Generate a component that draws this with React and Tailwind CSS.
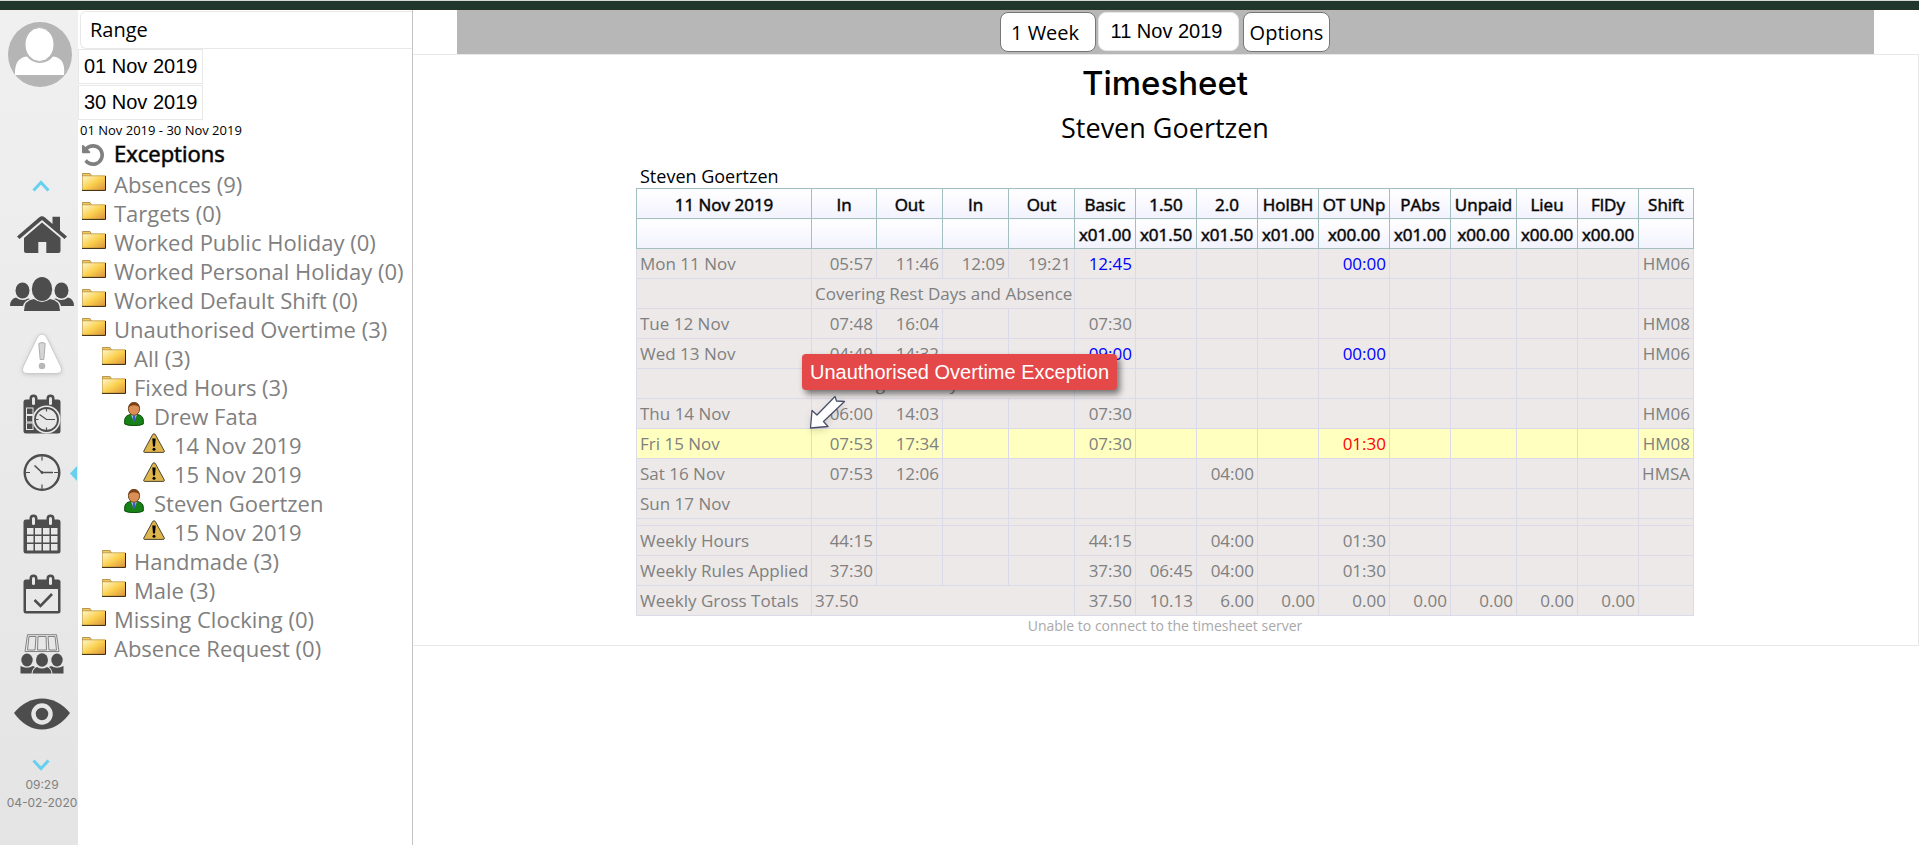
import React, { useState } from 'react'

const FolderIcon = () => (
    <svg viewBox="0 0 24 18" className="w-6 h-[18px]">
        <defs>
            <linearGradient id="folder" x1="0" y1="0" x2="1" y2="1">
                <stop offset="0" stopColor="#fff8d0" />
                <stop offset="0.5" stopColor="#fbd04e" />
                <stop offset="1" stopColor="#d8903c" />
            </linearGradient>
        </defs>
        <path d="M0.5 3V0.5H8L9.5 3Z" fill="#f3c95a" stroke="#a5823a" strokeWidth="0.8" />
        <rect x="0.5" y="2.7" width="23" height="14.8" fill="url(#folder)" />
        <path d="M0.4 17V2.8H23.5" fill="none" stroke="#c09a48" strokeWidth="0.8" />
        <path d="M23.5 3V17.4H0" fill="none" stroke="#33230c" strokeWidth="1" />
    </svg>
)

const PersonIcon = () => (
    <svg viewBox="0 0 20 24" className="w-5 h-6">
        <path d="M0.7 22V18Q1 13.5 6.5 12.5H13.5Q19 13.5 19.3 18V22Q17 23.6 10 23.6T0.7 22Z" fill="#178017" stroke="#0b4f0b" />
        <path d="M7 12.5H13L10.5 19H9.5Z" fill="#a9c4ff" />
        <path d="M9 13.5H11.2L11.4 18L10 20L8.8 18Z" fill="#4456c8" />
        <ellipse cx="10" cy="6.8" rx="5.6" ry="6.5" fill="#d98f55" stroke="#6b3c14" strokeWidth="0.9" />
        <path d="M4.2 6Q4.6 0.4 10 0.4T15.8 6Q14 3.2 10 3.2T4.2 6Z" fill="#7a4216" />
    </svg>
)

const AlertIcon = () => (
    <svg viewBox="0 0 22 20" className="w-[22px] h-5">
        <path d="M11 0.8Q12 0.8 12.6 2L21.3 18Q21.5 19.3 20.5 19.4H1.5Q0.5 19.3 0.8 18L9.4 2Q10 0.8 11 0.8Z" fill="#dfb64c" stroke="#4d4634" />
        <path d="M9.3 5.5H12.7L12 13.5H10Z" fill="#000" />
        <circle cx="11" cy="16.2" r="1.5" fill="#000" />
    </svg>
)

const UndoIcon = () => (
    <svg viewBox="0 128 1536 1536" className="w-[22px] h-[22px]">
        <path fill="#808080" d="M1536 896q0 156-61 298t-164 245-245 164-298 61q-172 0-327-72.5t-264-204.5q-7-10-6.5-22.5t8.500-20.500l137-138q10-9 25-9 16 2 23 12 73 95 179 147t225 52q104 0 198.500-40.500t163.500-109.500 109.500-163.500 40.500-198.500-40.500-198.500-109.500-163.500-163.500-109.500-198.500-40.500q-98 0-188 35.500t-160 101.500l137 138q31 30 14 69-17 40-59 40h-448q-26 0-45-19t-19-45v-448q0-42 40-59 39-17 69 14l130 129q107-101 244.500-156.500t284.500-55.500q156 0 298 61t245 164 164 245 61 298z" />
    </svg>
)

const HomeIcon = () => (
    <svg viewBox="0 0 50 37" className="w-[50px] h-[37px]" fill="#4d4d4d">
        <path d="M25 0.3Q26.500 0.3 28 1.500L35.500 8V0.800H43V14.500L50 20.500L47.500 23L25 4L2.500 23L0 20.500L22 1.500Q23.500 0.300 25 0.300Z" />
        <path d="M25 6.500L43.500 22V35Q43.500 37 41.500 37H29.300V26H21.300V37H9Q7 37 7 35V22Z" />
    </svg>
)

const UsersIcon = () => (
    <svg viewBox="0 0 64 34" className="w-16 h-[34px]" fill="#4d4d4d">
        <ellipse cx="12.500" cy="13.500" rx="7" ry="8" />
        <ellipse cx="51.500" cy="13.500" rx="7" ry="8" />
        <path d="M0 29Q0 22 6 20.500Q12 25 18 21.500L20 22Q14 24 13 29Z" />
        <path d="M64 29Q64 22 58 20.500Q52 25 46 21.500L44 22Q50 24 51 29Z" />
        <ellipse cx="32" cy="12" rx="10.200" ry="12" />
        <path d="M14 34Q14 23 24 22Q32 28 40 22Q50 23 50 34Z" />
    </svg>
)

const WarningIcon = () => (
    <svg viewBox="0 0 42 42" className="w-[42px] h-[42px] drop-shadow-sm">
        <path d="M21 1Q24 1 26 5L40 34Q42 40 36 40.500H6Q0 40 2 34L16 5Q18 1 21 1Z" fill="#fff" stroke="#cbcbcb" />
        <path d="M17.800 10.500Q21 8.500 24.200 10.500L22.800 26.500H19.200Z" fill="#d6d6d6" stroke="#adadad" />
        <circle cx="21" cy="33" r="3.300" fill="#b8b8b8" />
    </svg>
)

// shared calendar body, the children go on the page of it
const Calendar = ({ children }) => (
    <svg viewBox="0 0 38 40" className="w-[38px] h-10">
        <rect x="0.500" y="5.500" width="37" height="34" rx="2.500" fill="#4d4d4d" />
        <rect x="6.500" y="0.500" width="8" height="13" rx="4" fill="#4d4d4d" />
        <rect x="23.500" y="0.500" width="8" height="13" rx="4" fill="#4d4d4d" />
        <rect x="9" y="3" width="3" height="8" rx="1.500" fill="#e8e8e8" />
        <rect x="26" y="3" width="3" height="8" rx="1.500" fill="#e8e8e8" />
        {children}
    </svg>
)

const CalendarClockIcon = () => (
    <Calendar>
        {[14, 21.500, 29].map((y) => (
            <rect key={y} x="3.500" y={y} width="6.500" height="6.500" fill="#4d4d4d" stroke="#e8e8e8" />
        ))}
        <circle cx="23.500" cy="25.500" r="14" fill="#e8e8e8" />
        <circle cx="23.500" cy="25.500" r="11.500" fill="none" stroke="#4d4d4d" strokeWidth="1.800" />
        <path d="M16.500 20.500L23.500 25.500H32M23.500 15V17.500M23.500 33.500V36M13 25.500H15.500" fill="none" stroke="#4d4d4d" strokeWidth="1.200" />
    </Calendar>
)

const ClockIcon = () => (
    <svg viewBox="0 0 38 40" className="w-[38px] h-10" fill="none" stroke="#4d4d4d">
        <circle cx="19" cy="18.500" r="17.300" strokeWidth="2.400" />
        <path d="M11.500 11.500L19 18.500H30" strokeWidth="1.600" />
        <path d="M19 2.500V6.500M19 30.500V34.500M3 18.500H7M31 18.500H35" strokeWidth="1.200" />
        <circle cx="19" cy="18.500" r="1" fill="#4d4d4d" />
    </svg>
)

const CalendarGridIcon = () => (
    <Calendar>
        {[14, 22, 30].map((y) =>
            [4, 12, 20, 28].map((x) => (
                <rect key={x + '-' + y} x={x} y={y} width="6.500" height="6.500" fill="#e8e8e8" />
            ))
        )}
    </Calendar>
)

const CalendarCheckIcon = () => (
    <Calendar>
        <rect x="3" y="15" width="32" height="22" fill="#e8e8e8" />
        <path d="M11.500 26L17.500 32L29 20" fill="none" stroke="#4d4d4d" strokeWidth="2.600" />
    </Calendar>
)

const MeetingIcon = () => (
    <svg viewBox="0 0 44 40" className="w-11 h-10">
        <g fill="none" stroke="#777" strokeWidth="0.900">
            <path d="M7.500 0.700H36.500L39 17.500H5Z" />
            <path d="M9 2.500L7.500 16H15L16 2.500ZM18 2.500L17.500 16H26.500L26 2.500ZM28 2.500L29 16H36.500L35 2.500Z" />
        </g>
        <g fill="#4d4d4d">
            <ellipse cx="7" cy="26" rx="5.700" ry="6.500" />
            <ellipse cx="37" cy="26" rx="5.700" ry="6.500" />
            <ellipse cx="22" cy="26" rx="6" ry="6.800" />
            <path d="M0.500 39.500V32Q7 35.500 13 32L15 33Q12 35 11.500 39.500Z" />
            <path d="M43.500 39.500V32Q37 35.500 31 32L29 33Q32 35 32.500 39.500Z" />
            <path d="M12.500 39.500Q13 34.500 17 33Q22 36 27 33Q31 34.500 31.500 39.500Z" />
        </g>
    </svg>
)

const EyeIcon = () => (
    <svg viewBox="0 0 56 32" className="w-14 h-8">
        <path d="M0 15Q12 0.500 28 0.500T56 15Q44 31.500 28 31.500T0 15Z" fill="#4d4d4d" />
        <circle cx="28" cy="16" r="8.500" fill="none" stroke="#e6e6e6" strokeWidth="4.500" />
    </svg>
)

const AvatarIcon = () => (
    <svg viewBox="0 0 64 65" className="w-16 h-[65px]">
        <ellipse cx="32" cy="32.500" rx="32" ry="32.500" fill="#b5b5b5" />
        <path d="M7 53Q6 36 19 34.500Q24 41 32 41T45 34.500Q58 36 56 53Z" fill="#fff" />
        <ellipse cx="31.500" cy="22.500" rx="14.500" ry="17" fill="#fff" stroke="#b5b5b5" />
    </svg>
)

const menu = [
    { name: 'Home', Icon: HomeIcon },
    { name: 'Employees', Icon: UsersIcon },
    { name: 'Exceptions', Icon: WarningIcon },
    { name: 'Planner', Icon: CalendarClockIcon },
    { name: 'Timesheet', Icon: ClockIcon, active: true },
    { name: 'Calendar', Icon: CalendarGridIcon },
    { name: 'Absence', Icon: CalendarCheckIcon },
    { name: 'Meetings', Icon: MeetingIcon },
    { name: 'View', Icon: EyeIcon },
]

const tree = [
    { level: 0, type: 'folder', label: 'Absences (9)' },
    { level: 0, type: 'folder', label: 'Targets (0)' },
    { level: 0, type: 'folder', label: 'Worked Public Holiday (0)' },
    { level: 0, type: 'folder', label: 'Worked Personal Holiday (0)' },
    { level: 0, type: 'folder', label: 'Worked Default Shift (0)' },
    { level: 0, type: 'folder', label: 'Unauthorised Overtime (3)' },
    { level: 1, type: 'folder', label: 'All (3)' },
    { level: 1, type: 'folder', label: 'Fixed Hours (3)' },
    { level: 2, type: 'person', label: 'Drew Fata' },
    { level: 3, type: 'alert', label: '14 Nov 2019' },
    { level: 3, type: 'alert', label: '15 Nov 2019' },
    { level: 2, type: 'person', label: 'Steven Goertzen' },
    { level: 3, type: 'alert', label: '15 Nov 2019' },
    { level: 1, type: 'folder', label: 'Handmade (3)' },
    { level: 1, type: 'folder', label: 'Male (3)' },
    { level: 0, type: 'folder', label: 'Missing Clocking (0)' },
    { level: 0, type: 'folder', label: 'Absence Request (0)' },
]

const treeIcons = { folder: FolderIcon, person: PersonIcon, alert: AlertIcon }
const indents = ['pl-1', 'pl-6', 'pl-11', 'pl-16']

const columns = [
    { title: '11 Nov 2019', rate: '', width: 'w-[175px]' },
    { title: 'In', rate: '', width: 'w-[65px]' },
    { title: 'Out', rate: '', width: 'w-[66px]' },
    { title: 'In', rate: '', width: 'w-[66px]' },
    { title: 'Out', rate: '', width: 'w-[66px]' },
    { title: 'Basic', rate: 'x01.00', width: 'w-[61px]' },
    { title: '1.50', rate: 'x01.50', width: 'w-[61px]' },
    { title: '2.0', rate: 'x01.50', width: 'w-[61px]' },
    { title: 'HolBH', rate: 'x01.00', width: 'w-[61px]' },
    { title: 'OT UNp', rate: 'x00.00', width: 'w-[71px]' },
    { title: 'PAbs', rate: 'x01.00', width: 'w-[61px]' },
    { title: 'Unpaid', rate: 'x00.00', width: 'w-[66px]' },
    { title: 'Lieu', rate: 'x00.00', width: 'w-[61px]' },
    { title: 'FlDy', rate: 'x00.00', width: 'w-[61px]' },
    { title: 'Shift', rate: '', width: 'w-[55px]' },
]

// clock: the four In/Out cells, note: one text across them, hours: Basic to FlDy
const rows = [
    { day: 'Mon 11 Nov', clock: ['05:57', '11:46', '12:09', '19:21'], hours: ['12:45', '', '', '', '00:00', '', '', '', ''], shift: 'HM06', color: 'text-[#0000ff]' },
    { day: '', note: 'Covering Rest Days and Absence' },
    { day: 'Tue 12 Nov', clock: ['07:48', '16:04', '', ''], hours: ['07:30', '', '', '', '', '', '', '', ''], shift: 'HM08' },
    { day: 'Wed 13 Nov', clock: ['04:49', '14:32', '', ''], hours: ['09:00', '', '', '', '00:00', '', '', '', ''], shift: 'HM06', color: 'text-[#0000ff]' },
    { day: '', note: 'Covering Rest Days' },
    { day: 'Thu 14 Nov', clock: ['06:00', '14:03', '', ''], hours: ['07:30', '', '', '', '', '', '', '', ''], shift: 'HM06' },
    { day: 'Fri 15 Nov', clock: ['07:53', '17:34', '', ''], hours: ['07:30', '', '', '', '01:30', '', '', '', ''], shift: 'HM08', exception: true },
    { day: 'Sat 16 Nov', clock: ['07:53', '12:06', '', ''], hours: ['', '', '04:00', '', '', '', '', '', ''], shift: 'HMSA' },
    { day: 'Sun 17 Nov', clock: ['', '', '', ''] },
    { spacer: true, clock: ['', '', '', ''] },
    { day: 'Weekly Hours', clock: ['44:15', '', '', ''], hours: ['44:15', '', '04:00', '', '01:30', '', '', '', ''] },
    { day: 'Weekly Rules Applied', clock: ['37:30', '', '', ''], hours: ['37:30', '06:45', '04:00', '', '01:30', '', '', '', ''] },
    { day: 'Weekly Gross Totals', note: '37.50', hours: ['37.50', '10.13', '6.00', '0.00', '0.00', '0.00', '0.00', '0.00', '0.00'] },
]

const emptyHours = ['', '', '', '', '', '', '', '', '']

const Rail = () => (
    <nav className="w-[78px] shrink-0 pl-1.5 pt-3 flex flex-col items-center bg-linear-to-b from-[#f0f0f0] to-[#e4e4e4]">
        <a href="#profile" aria-label="Profile" className="self-start ml-0.5 mb-[87px]"><AvatarIcon /></a>
        <button aria-label="Scroll up" className="h-[30px] pr-0.5 pb-3 flex items-end">
            <svg viewBox="0 0 18 12" className="w-[18px] h-3"><path d="M1.500 10.500L9 2.500L16.500 10.500" fill="none" stroke="#66d0ee" strokeWidth="3" /></svg>
        </button>
        {menu.map(({ name, Icon, active }) => (
            <a key={name} href={'#' + name.toLowerCase()} aria-label={name} className="relative w-full h-15 flex items-center justify-center">
                <Icon />
                {active && (
                    <svg viewBox="0 0 7 15" className="absolute right-px top-[22px] w-[7px] h-[15px]"><path d="M7 0V15L0 7.500Z" fill="#66d0ee" /></svg>
                )}
            </a>
        ))}
        <button aria-label="Scroll down" className="h-[30px] pr-0.5 pb-[3px] flex items-end">
            <svg viewBox="0 0 18 12" className="w-[18px] h-3"><path d="M1.500 1.500L9 9.500L16.500 1.500" fill="none" stroke="#66d0ee" strokeWidth="3" /></svg>
        </button>
        <div className="pt-0.5 text-center text-xs leading-[18px] text-[#808080] font-['Inter',sans-serif] whitespace-nowrap">
            <p>09:29</p>
            <p>04-02-2020</p>
        </div>
    </nav>
)

const ExceptionsPanel = () => {
    const [from, setFrom] = useState('01 Nov 2019')
    const [to, setTo] = useState('30 Nov 2019')

    return (
        <aside className="w-[335px] shrink-0 border-r border-[#c4c4c4]">
            <div className="pl-0.5 pt-px">
                <select aria-label="Period" className="block w-full h-[38px] px-[9px] appearance-none border border-r-0 border-[#e8e8e8] rounded-l-md bg-white text-xl">
                    <option>Range</option>
                </select>
            </div>
            <div className="flex flex-col items-start gap-px font-['Liberation_Sans',Arial,sans-serif]">
                <input aria-label="From" value={from} onChange={(e) => setFrom(e.target.value)} className="w-[125px] h-[35px] px-[5px] border border-[#e8e8e8] text-xl" />
                <input aria-label="To" value={to} onChange={(e) => setTo(e.target.value)} className="w-[125px] h-[35px] px-[5px] border border-[#e8e8e8] text-xl" />
            </div>
            <p className="pl-0.5 text-[13px] leading-5">01 Nov 2019 - 30 Nov 2019</p>
            <div className="pl-1 h-[30px] flex items-start text-[22px]">
                <button aria-label="Reload" className="w-8 pt-1"><UndoIcon /></button>
                <h2 className="leading-[26px] [-webkit-text-stroke:1px_rgba(0,0,0,0.6)]">Exceptions</h2>
            </div>
            <ul>
                {tree.map((node, index) => {
                    const Icon = treeIcons[node.type]
                    return (
                        <li key={index} className={indents[node.level]}>
                            <a href="#node" className="flex items-start h-[29px] text-[22px] leading-[29px] text-[#808080] whitespace-nowrap">
                                <span className="w-6 h-6 mr-2 flex items-center justify-center"><Icon /></span>
                                {node.label}
                            </a>
                        </li>
                    )
                })}
            </ul>
        </aside>
    )
}

const TimesheetTable = () => {
    const cell = 'border border-[#dadae8] px-[3px]'
    const head = 'h-[30px] pt-0.5 border border-[#a3bfc0] bg-linear-to-b from-white to-[#f2f2fe] font-normal [-webkit-text-stroke:1px_rgba(0,0,0,0.5)]'

    const hourColor = (row, index) => {
        if (row.exception && index === 4) return 'text-[#ff0000]'
        return row.color || ''
    }

    return (
        <div className="relative text-[17px] leading-[23px]">
            <table className="w-[1058px] table-fixed border-collapse">
                <caption className="text-left px-1 text-lg leading-[23px]">Steven Goertzen</caption>
                <colgroup>
                    {columns.map((col, index) => <col key={index} className={col.width} />)}
                </colgroup>
                <thead>
                    <tr>{columns.map((col, index) => <th key={index} className={head}>{col.title}</th>)}</tr>
                    <tr>{columns.map((col, index) => <th key={index} className={head}>{col.rate}</th>)}</tr>
                </thead>
                <tbody className="text-[#808080] text-right whitespace-nowrap">
                    {rows.map((row, index) => (
                        <tr key={index} className={`${row.spacer ? 'h-[7px]' : 'h-[30px]'} ${row.exception ? 'bg-[#ffffc0]' : 'bg-[#ece9e8]'}`}>
                            <td className={`${cell} text-left`}>{row.day}</td>
                            {row.note
                                ? <td colSpan={4} className={`${cell} text-left`}>{row.note}</td>
                                : row.clock.map((time, i) => <td key={i} className={cell}>{time}</td>)}
                            {(row.hours || emptyHours).map((time, i) => (
                                <td key={i} className={`${cell} ${hourColor(row, i)}`}>{time}</td>
                            ))}
                            <td className={cell}>{row.shift}</td>
                        </tr>
                    ))}
                </tbody>
            </table>

            {/* Exception message that points at the highlighted day */}
            <div role="tooltip" className="absolute left-[166px] top-[189px] h-9 px-2 rounded-sm bg-[#e44848] text-white text-xl leading-9 whitespace-nowrap shadow-[3px_4px_6px_rgba(0,0,0,0.5)] font-['Liberation_Sans',Arial,sans-serif]">
                Unauthorised Overtime Exception
            </div>
            <svg viewBox="0 0 36 36" className="absolute left-[173px] top-[229px] w-9 h-9 drop-shadow-md">
                <path d="M1.500 34L3 16.500L8 21L26 2.500L27.500 7L35.500 7.500L14.500 27.500L19 32.500Z" fill="#fff" stroke="#4a4f6a" strokeWidth="1.300" strokeLinejoin="round" />
            </svg>
        </div>
    )
}

const App = () => {
    const [date, setDate] = useState('11 Nov 2019')

    return (
        <div className="min-h-screen flex flex-col bg-white text-black font-['Open_Sans',sans-serif]">
            <div className="h-2.5 border-t border-[#d5d9d7] bg-[#21372b]"></div>
            <div className="flex-1 flex">
                <Rail />
                <ExceptionsPanel />
                <main className="flex-1 min-w-0">
                    <div className="ml-11 mr-[45px] h-11 pt-0.5 pr-px flex justify-center items-start bg-[#b7b7b7] text-xl">
                        <select aria-label="View" className="w-24 h-10 pl-2.5 pt-0.5 mr-0.5 appearance-none rounded-lg border border-[#777] bg-white">
                            <option>1 Week</option>
                        </select>
                        <input aria-label="Date" value={date} onChange={(e) => setDate(e.target.value)} className="w-[141px] h-[39px] pr-1 mr-1 rounded-lg border border-[#e8e8e8] bg-white text-center font-['Liberation_Sans',Arial,sans-serif]" />
                        <button className="w-[87px] h-10 pt-0.5 rounded-lg border border-[#777] bg-white">Options</button>
                    </div>
                    <section className="pr-px border-t border-r border-b border-[#e8e8e8] flex flex-col items-center">
                        <h1 className="pt-0.5 text-[33px] leading-[52px] font-medium font-['Inter',sans-serif]">Timesheet</h1>
                        <h2 className="mb-[18px] text-[27px] leading-[38px]">Steven Goertzen</h2>
                        <TimesheetTable />
                        <p className="pb-[9px] text-sm leading-5 text-[#a9a9a9]">Unable to connect to the timesheet server</p>
                    </section>
                </main>
            </div>
        </div>
    )
}

export default App
